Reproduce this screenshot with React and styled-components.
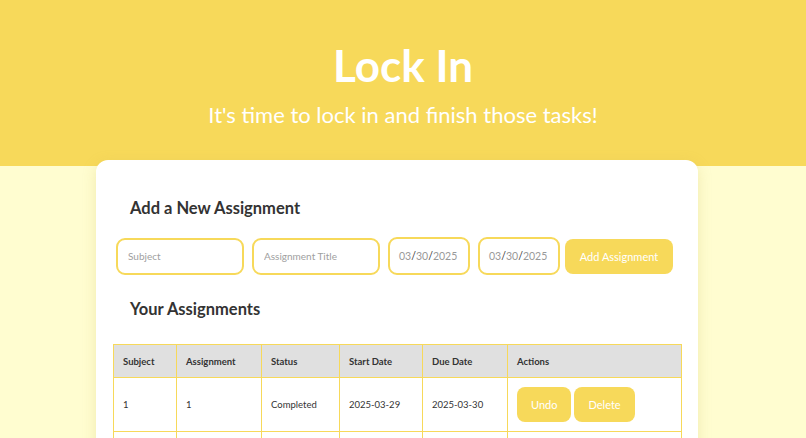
import React, { useState } from 'react';
import styled, { createGlobalStyle } from 'styled-components';

const GlobalStyle = createGlobalStyle`
  body {
    margin: 0;
    background: #fffdd0;
    font-family: Lato, "Noto Sans", sans-serif;
    color: #333;
  }
`;

const columns = [
  { label: 'Subject', width: 63 },
  { label: 'Assignment', width: 85 },
  { label: 'Status', width: 78 },
  { label: 'Start Date', width: 83 },
  { label: 'Due Date', width: 85 },
  { label: 'Actions' },
];

const App = () => {
  const [assignments] = useState([
    { id: 1, subject: '1', title: '1', status: 'Completed', start: '2025-03-29', due: '2025-03-30' },
    { id: 2, subject: '', title: '', status: '', start: '', due: '' },
  ]);

  return (
    <>
      <GlobalStyle />
      <Header>
        <h1>Lock In</h1>
        <p>It's time to lock in and finish those tasks!</p>
      </Header>
      <Card>
        <SectionTitle>Add a New Assignment</SectionTitle>
        <Form onSubmit={e => e.preventDefault()}>
          <Field width={128} placeholder="Subject" />
          <Field width={128} placeholder="Assignment Title" />
          <DateField><span>03</span>/<span>30</span>/<span>2025</span></DateField>
          <DateField><span>03</span>/<span>30</span>/<span>2025</span></DateField>
          <AddButton type="submit">Add Assignment</AddButton>
        </Form>
        <SectionTitle>Your Assignments</SectionTitle>
        <Table>
          <colgroup>
            {columns.map(c => (
              <col key={c.label} style={c.width ? { width: c.width } : undefined} />
            ))}
          </colgroup>
          <thead>
            <tr>
              {columns.map(c => <th key={c.label}>{c.label}</th>)}
            </tr>
          </thead>
          <tbody>
            {assignments.map(a => (
              <tr key={a.id}>
                <td>{a.subject}</td>
                <td>{a.title}</td>
                <td>{a.status}</td>
                <td>{a.start}</td>
                <td>{a.due}</td>
                <td>
                  {a.status ? (
                    <Actions>
                      <ActionButton>Undo</ActionButton>
                      <ActionButton>Delete</ActionButton>
                    </Actions>
                  ) : null}
                </td>
              </tr>
            ))}
          </tbody>
        </Table>
      </Card>
    </>
  );
};

export default App;

const Header = styled.header`
  height: 166px;
  box-sizing: border-box;
  background: #f7d95a;
  color: #fff;
  text-align: center;
  padding-top: 38px;

  h1 {
    margin: 0;
    font-size: 44px;
    font-weight: 700;
    line-height: 54px;
  }

  p {
    margin: 9px 0 0;
    font-size: 22px;
    font-weight: 400;
    line-height: 28px;
  }
`;

const Card = styled.main`
  width: 602px;
  margin: -6px 0 0 96px;
  background: #fff;
  border-radius: 12px;
  box-shadow: 0 4px 14px rgba(200, 180, 80, 0.25);
  padding: 36px 16px 40px 17px;
  box-sizing: border-box;
`;

const SectionTitle = styled.h2`
  margin: 0 0 0 17px;
  font-size: 16.5px;
  font-weight: 700;
  color: #333;
  line-height: 24px;
`;

const Form = styled.form`
  display: flex;
  align-items: center;
  gap: 8px;
  margin: 17px 0 22px 3px;
`;

const Field = styled.input`
  width: ${props => props.width}px;
  height: 37px;
  box-sizing: border-box;
  border: 2px solid #f7d95a;
  border-radius: 9px;
  padding: 0 10px;
  font-family: inherit;
  font-size: 10px;
  color: #333;
  outline: none;

  &::placeholder {
    color: #a0a0a0;
  }
`;

const DateField = styled.div`
  width: 82px;
  height: 38px;
  box-sizing: border-box;
  border: 2px solid #f7d95a;
  border-radius: 9px;
  padding: 0 9px;
  display: flex;
  align-items: center;
  font-size: 10.5px;
  color: #333;

  span {
    color: #999;
  }
`;

const AddButton = styled.button`
  margin-left: -3px;
  width: 108px;
  height: 35px;
  border: none;
  border-radius: 8px;
  background: #f7d95a;
  color: #fff;
  font-family: inherit;
  font-size: 11px;
  font-weight: 400;
`;

const Table = styled.table`
  width: 569px;
  margin-top: 23px;
  border-collapse: collapse;
  table-layout: fixed;
  font-size: 9.5px;
  color: #333;

  th,
  td {
    border: 1px solid #f7d95a;
    text-align: left;
    padding: 0 9px;
  }

  th {
    background: #e0e0e0;
    height: 32px;
    font-weight: 700;
  }

  td {
    height: 53px;
  }
`;

const Actions = styled.div`
  display: flex;
  gap: 3px;
`;

const ActionButton = styled.button`
  height: 35px;
  padding: 0 14px;
  border: none;
  border-radius: 8px;
  background: #f7d95a;
  color: #fff;
  font-family: inherit;
  font-size: 11px;
  font-weight: 400;
`;
